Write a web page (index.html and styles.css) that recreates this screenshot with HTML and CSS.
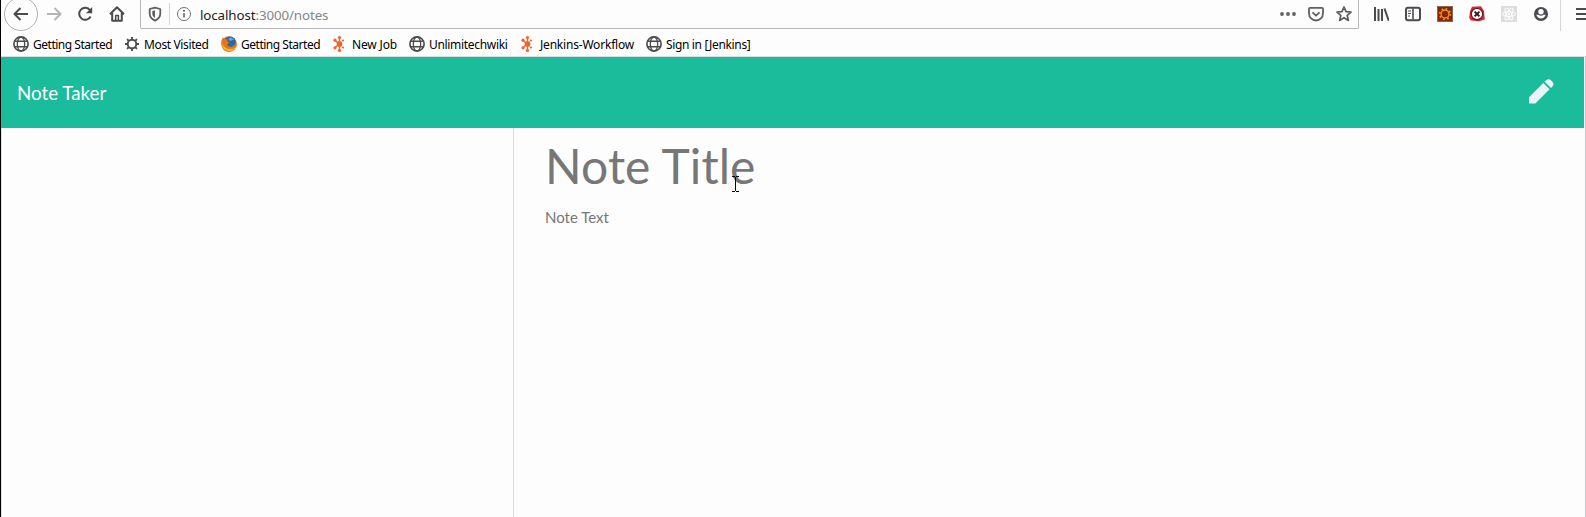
FILE: index.html
```html
<!DOCTYPE html>
<html lang="en">
<head>
<meta charset="utf-8">
<title>Note Taker</title>
<link rel="stylesheet" href="styles.css">
</head>
<body>
<svg class="defs" aria-hidden="true">
  <symbol id="globe" viewBox="0 0 16 16"><g fill="none" stroke="#4d4d4d"><circle cx="8" cy="8" r="7.1" stroke-width="1.7"/><ellipse cx="8" cy="8" rx="3.7" ry="7" stroke-width="1.3"/><path d="M1.5 5.2h13M1.5 10.8h13" stroke-width="1.4"/></g></symbol>
  <symbol id="hub" viewBox="0 0 16 16"><g fill="#f0612b" stroke="#f0612b"><path d="M7.500 2v3M7.500 11v3M3 4.500l3 2.500M3 11.500l3-2.500" stroke-width="1.200"/><circle cx="7.500" cy="8" r="2.900" stroke="none"/><circle cx="7.500" cy="1.600" r="1.600" stroke="none"/><circle cx="7.500" cy="14.400" r="1.600" stroke="none"/><circle cx="3" cy="4.200" r="1.600" stroke="none"/><circle cx="3" cy="11.800" r="1.600" stroke="none"/><circle cx="11" cy="4.500" r="1.100" stroke="none"/><circle cx="11" cy="11.500" r="1.100" stroke="none"/></g></symbol>
</svg>
<div class="window">
  <header class="chrome">
    <div class="toolbar">
      <div class="nav">
        <span class="back"><svg class="icon" viewBox="0 0 16 16"><path d="M15 8H2M7.500 2L1.500 8l6 6" class="line"/></svg></span>
        <svg class="icon muted" viewBox="0 0 16 16"><path d="M1 8h13M8.500 2l6 6-6 6" class="line"/></svg>
        <svg class="icon" viewBox="0 0 16 16"><path d="M13 4.200A6 6 0 1 0 13.600 10.500" class="line"/><path d="M15.200 1v6.300H9z" fill="#4a4a4f"/></svg>
        <svg class="icon" viewBox="0 0 16 16"><path d="M1 8.200L8 1.300l7 6.900M3.200 7v7.700h9.600V7" class="line"/><path d="M6.700 14V9.500h2.700V14" class="line thin"/></svg>
      </div>
      <div class="urlbar">
        <span class="shield"><svg class="icon" viewBox="0 0 16 16"><path d="M8 1.700L2.700 3v4.500c0 3.700 2.700 6 5.300 7.100 2.600-1.100 5.300-3.400 5.300-7.100V3z" class="line mid"/><path d="M8 4.200L5.300 5v3c0 1.800 1.300 3.200 2.700 4z" fill="#606064"/></svg></span>
        <svg class="icon info" viewBox="0 0 16 16"><circle cx="8" cy="8" r="6.500" fill="none" stroke="#737376"/><path d="M8 7v4.500" stroke="#606064" stroke-width="1.500"/><circle cx="8" cy="4.700" r="1" fill="#606064"/></svg>
        <span class="url"><b>localhost</b>:3000/notes</span>
        <div class="actions">
          <svg class="icon" viewBox="0 0 16 16"><g fill="#606064"><circle cx="2" cy="8" r="1.900"/><circle cx="8" cy="8" r="1.900"/><circle cx="14" cy="8" r="1.900"/></g></svg>
          <svg class="icon" viewBox="0 0 16 16"><path d="M1 2.800q0-1 1-1h12q1 0 1 1V7.500a7 7 0 0 1-14 0z" class="line mid"/><path d="M4.500 6.300L8 9.600l3.500-3.300" class="line mid"/></svg>
          <svg class="icon" viewBox="0 0 16 16"><path d="M8 1l2 4.700 5 .4-3.800 3.300 1.200 5L8 11.700l-4.400 2.700 1.200-5L1 6.100l5-.4z" class="line mid"/></svg>
        </div>
      </div>
      <div class="tools">
        <svg class="icon" viewBox="0 0 16 16"><path d="M2 1v14M5.500 3v12M9 3v12M11.500 2.500L15.700 14.800" class="line"/></svg>
        <svg class="icon" viewBox="0 0 16 16"><rect x="1" y="1.800" width="14" height="12.400" rx="2" class="line"/><path d="M8 2v12" class="line mid"/><path d="M3 5h3M3 7.500h3M3 10h2" class="line hair"/></svg>
        <svg class="icon" viewBox="0 0 16 16"><rect x=".5" y=".5" width="15" height="15" fill="#8c2308" stroke="#806b5d"/><circle cx="8" cy="8" r="4" fill="none" stroke="#e9a01f" stroke-width="1.300"/><circle cx="8" cy="8" r="5.400" fill="none" stroke="#e9a01f" stroke-width="1.500" stroke-dasharray="1.700 2.541"/></svg>
        <svg class="icon" viewBox="0 0 16 16"><path d="M3 .8l9-.5 3 4.700.8 8.500-5.800 1.700-8-.7L.2 12 1 5z" fill="#d72732"/><circle cx="8" cy="8" r="5.700" fill="#fff" stroke="#641f27" stroke-width="1.200"/><path d="M5.600 5.600l4.800 4.800M10.400 5.600l-4.800 4.800" stroke="#37171a" stroke-width="2"/></svg>
        <svg class="icon" viewBox="0 0 16 16"><path fill="#dcdddf" d="M0 0h16v16H0z"/><g fill="none" stroke="#fff"><ellipse cx="8" cy="8" rx="6.500" ry="2.500"/><ellipse cx="8" cy="8" rx="6.500" ry="2.500" transform="rotate(60 8 8)"/><ellipse cx="8" cy="8" rx="6.500" ry="2.500" transform="rotate(120 8 8)"/></g><circle cx="8" cy="8" r="1.300" fill="#fff"/></svg>
        <svg class="icon" viewBox="0 0 16 16"><circle cx="8" cy="8" r="7" fill="#4a4a4f"/><circle cx="8" cy="5.700" r="2.700" fill="#fdfdfd"/><path d="M3.300 8.800h2q2.700 2 5.400 0h2Q11.500 12.500 8 12.500T3.300 8.800z" fill="#fdfdfd"/></svg>
      </div>
      <div class="menu"><svg class="icon" viewBox="0 0 16 16"><path d="M0 3h16M0 8h16M0 13h16" class="line"/></svg></div>
    </div>
    <nav class="bookmarks">
      <a class="bm"><svg class="icon"><use href="#globe"/></svg><span>Getting Started</span></a>
      <a class="bm visited"><svg class="icon" viewBox="0 0 16 16"><circle cx="8" cy="8" r="4.300" fill="none" stroke="#4d4d4d" stroke-width="1.900"/><path d="M8 1v3M8 12v3M1 8h3M12 8h3M3.050 3.050l2 2M10.950 10.950l2 2M3.050 12.950l2-2M10.950 5.050l2-2" stroke="#4d4d4d" stroke-width="1.900"/></svg><span>Most Visited</span></a>
      <a class="bm"><svg class="icon" viewBox="0 0 16 16"><circle cx="8" cy="8" r="7.800" fill="#e8751a"/><circle cx="9" cy="6.500" r="5.900" fill="#286ba9"/><path d="M8 2q3-1 5 2-2-1-3 1-2 0-2-3z" fill="#62b4dc"/><path d="M.5 4L2 1.500 4 3l3 .4-1 2 2.500 1-2.500 2q1 3 5 2.200 3-.8 3.700-4.600l1 2q-.7 7.500-8 7.800Q0 15.500.5 4z" fill="#e8751a"/><path d="M1 7q0 8 8 8.200 4-.7 6-4.200-3 2.500-7 1.900-5-.6-7-5.900z" fill="#f7b12c"/></svg><span>Getting Started</span></a>
      <a class="bm job"><svg class="icon"><use href="#hub"/></svg><span>New Job</span></a>
      <a class="bm wiki"><svg class="icon"><use href="#globe"/></svg><span>Unlimitechwiki</span></a>
      <a class="bm flow"><svg class="icon"><use href="#hub"/></svg><span>Jenkins-Workflow</span></a>
      <a class="bm sign"><svg class="icon"><use href="#globe"/></svg><span>Sign in [Jenkins]</span></a>
    </nav>
  </header>
  <div class="page">
    <div class="navbar">
      <span class="brand">Note Taker</span>
      <svg class="pencil" viewBox="0 0 25 25"><g fill="#eaf5f8"><path d="M0 18.300L14.300 4l6.300 6.300L6.300 24.600H0z"/><path d="M15.700 2.700l1.600-1.600q2.200-1.800 4.300 0l2 2q1.800 2.100 0 4.200L22 8.900z"/></g></svg>
    </div>
    <main class="content">
      <aside class="list"></aside>
      <section class="editor">
        <div class="title">Note Title</div>
        <div class="text">Note Text</div>
        <svg class="cursor" viewBox="0 0 7 16"><path d="M0 .5h3M4 .5h3M3.500 1v14M0 15.500h3M4 15.500h3" stroke="#000" fill="none"/></svg>
      </section>
    </main>
  </div>
</div>
</body>
</html>
```
FILE: styles.css
```css
* { box-sizing: border-box; }
body { margin: 0; background: #fdfdfd; overflow: hidden; }
.defs { position: absolute; width: 0; height: 0; }
.window { height: 517px; border-left: 1px solid #000; display: flex; flex-direction: column; }
.icon { width: 16px; height: 16px; flex: none; display: block; }
.line { fill: none; stroke: #4a4a4f; stroke-width: 2; stroke-linejoin: round; }
.mid { stroke: #606064; stroke-width: 1.8; }
.thin { stroke-width: 1.5; }
.hair { stroke-width: 1; }
.muted { opacity: .4; margin-right: -1px; }

.chrome { height: 57px; flex: none; border-bottom: 1px solid #dcdce0; font-family: "Noto Sans", "Open Sans", sans-serif; }
.toolbar { display: flex; height: 32px; }
.nav { width: 139px; height: 28px; padding-left: 3px; display: flex; align-items: center; gap: 16px; }
.back { width: 34px; height: 34px; border: 1px solid #b1b1b3; border-radius: 50%; display: grid; place-items: center; flex: none; margin-right: -8px; }
.urlbar { width: 1219px; height: 29px; border: 1px solid #b8b8ba; border-top: 0; border-radius: 0 0 2px 2px; display: flex; align-items: center; }
.shield { height: 22px; width: 29px; padding-left: 6px; border-right: 1px solid #d7d7db; display: flex; align-items: center; }
.info { margin-left: 6px; }
.url { margin: 2px 0 0 8px; font-size: 13.33px; line-height: 20px; letter-spacing: -.1px; color: #858585; white-space: nowrap; }
.url b { font-weight: 400; color: #202020; }
.actions { display: flex; gap: 12px; margin: 0 6px 0 auto; }
.tools { display: flex; gap: 16px; height: 28px; align-items: center; padding-left: 14px; width: 201px; }
.menu { height: 31px; border-left: 1px solid #d7d7db; padding: 6px 0 0 15px; flex: 1; overflow: hidden; }

.bookmarks { display: flex; height: 24px; align-items: center; padding-left: 12px; }
.bm { width: 111px; display: flex; align-items: center; gap: 4px; color: #000; font-size: 12px; line-height: 16px; white-space: nowrap; letter-spacing: -.48px; }
.bm span { padding-top: 2px; }
.visited { width: 97px; letter-spacing: -.37px; }
.job { width: 77px; letter-spacing: -.15px; }
.wiki { letter-spacing: -.32px; }
.flow { width: 126px; letter-spacing: -.2px; }
.sign { letter-spacing: -.35px; }

.page { flex: 1; width: 1585px; display: flex; flex-direction: column; border-right: 1px solid #c8c8ca; border-left: 1px solid #e6e6e6; font-family: Lato, sans-serif; }
.navbar { height: 71px; margin: 0 1px 0 -1px; flex: none; background: #1abc9c; display: flex; justify-content: space-between; align-items: center; padding: 0 30px 0 16px; }
.brand { color: #fff; font-size: 18.75px; line-height: 28px; }
.pencil { width: 25px; height: 25px; margin-bottom: 2px; }
.content { flex: 1; display: flex; }
.list { width: 512px; border-right: 1px solid #dcdcde; }
.editor { position: relative; flex: 1; padding: 8px 0 0 31px; color: #777; }
.title { font-size: 48px; line-height: 60px; letter-spacing: .1px; }
.text { font-size: 15px; line-height: 22px; margin-top: 10px; }
.cursor { position: absolute; left: 218px; top: 48px; width: 7px; height: 16px; }
```
